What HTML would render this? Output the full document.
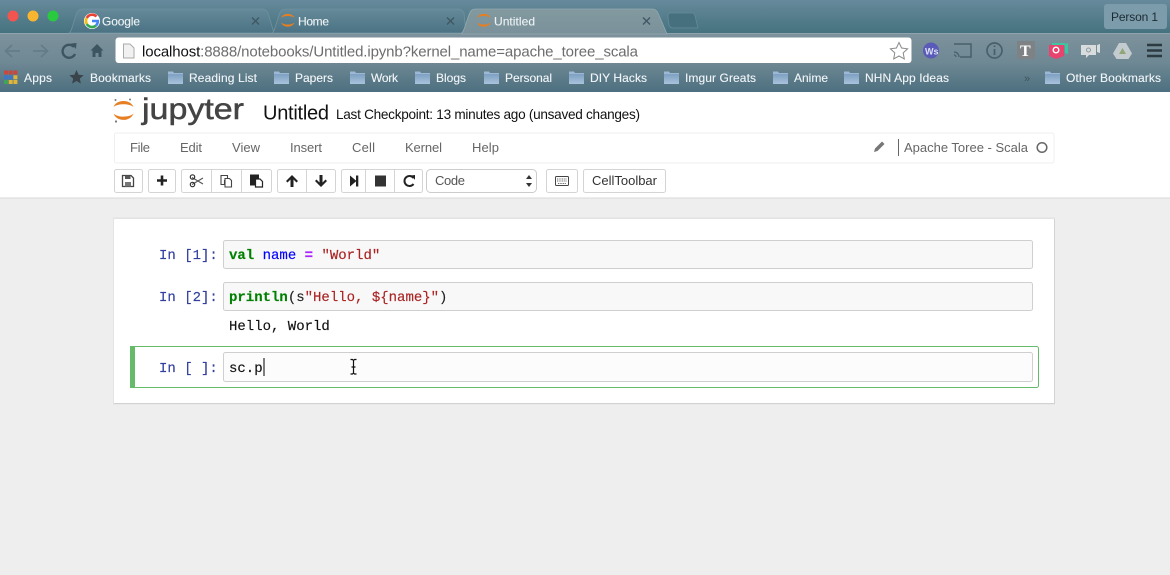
<!DOCTYPE html>
<html><head><meta charset="utf-8"><title>Untitled</title>
<style>
html,body{margin:0;padding:0;width:1170px;height:575px;overflow:hidden;background:#eee}
svg{display:block;filter:blur(.3px)}
text{font-family:"Liberation Sans",sans-serif;white-space:pre}
.bm{font-size:12px;fill:#f2f6f8;stroke:#f2f6f8;stroke-width:.12}
.tab{font-size:12px;fill:#eef3f5;stroke:#eef3f5;stroke-width:.12}
.m{font-size:13px;fill:#666}
.c{font-family:"Liberation Mono",monospace;font-size:14px;stroke-width:.15;paint-order:stroke}
.p{fill:#303f9f;stroke:#303f9f}
.btn{fill:#fff;stroke:#d4d4d4}
</style></head><body>
<svg width="1170" height="575" viewBox="0 0 1170 575" xmlns="http://www.w3.org/2000/svg">
<defs>
<linearGradient id="top" x1="0" y1="0" x2="0" y2="1"><stop offset="0" stop-color="#668a9b"/><stop offset="1" stop-color="#45727f"/></linearGradient>
<linearGradient id="bar" x1="0" y1="0" x2="0" y2="1"><stop offset="0" stop-color="#7d929c"/><stop offset=".5" stop-color="#6e8894"/><stop offset="1" stop-color="#4d6f7f"/></linearGradient>
<linearGradient id="atab" x1="0" y1="0" x2="0" y2="1"><stop offset="0" stop-color="#82999f"/><stop offset="1" stop-color="#7a919b"/></linearGradient>
<linearGradient id="itab" x1="0" y1="0" x2="0" y2="1"><stop offset="0" stop-color="#658a99"/><stop offset="1" stop-color="#4b7283"/></linearGradient>
<linearGradient id="fg" x1="0" y1="0" x2="0" y2="1"><stop offset="0" stop-color="#7ea0c2"/><stop offset="1" stop-color="#a9c2dc"/></linearGradient>
<g id="folder"><path d="M0 1.500h5l1 1.500h9v11H0z" fill="#9cb8d6"/><rect x="0" y="4" width="15" height="10" fill="url(#fg)"/></g>
<g id="jlogo"><path d="M0 6.500C3-1.500 17-1.500 20 6.500 16 2.800 4 2.800 0 6.500z" fill="#e67e22"/><path d="M0 13C4 17.200 16 17.200 20 13 17 21.500 3 21.500 0 13z" fill="#e67e22"/></g>
</defs>

<!-- chrome frame -->
<rect width="1170" height="33" fill="url(#top)"/>
<rect y="33" width="1170" height="59" fill="url(#bar)"/>
<rect y="33" width="1170" height="1" fill="#8ea3ad"/>

<circle cx="13" cy="16" r="5.500" fill="#f2544f"/>
<circle cx="33" cy="16" r="5.500" fill="#f8b52f"/>
<circle cx="53" cy="16" r="5.500" fill="#29c940"/>

<!-- tabs -->
<path d="M69 33C73 31 75 12 79 10Q80 9 83 9H262Q266 9 268 13L274 33z" fill="url(#itab)" stroke="#6f909e" stroke-width=".8"/>
<path d="M272 33C276 31 278 12 282 10Q283 9 286 9H458Q462 9 464 13L466 33z" fill="url(#itab)" stroke="#6f909e" stroke-width=".8"/>
<path d="M668 16Q668 13 671 13H692Q694 13 695 16L698 28H673Q670 28 669 25z" fill="#47707f" stroke="#658a99" stroke-width=".8"/>
<path d="M461 34C465 32 468 12 472 10Q473 9 476 9H652Q656 9 658 13L667 34z" fill="url(#atab)" stroke="#93a8b1" stroke-width=".8"/>

<circle cx="92" cy="21" r="8" fill="#fff"/>
<path d="M96.500 16.500A6 6 0 0 0 86.800 18" fill="none" stroke="#e94235" stroke-width="2.600"/>
<path d="M86.800 18A6 6 0 0 0 86.800 24" fill="none" stroke="#fbbc05" stroke-width="2.600"/>
<path d="M86.800 24A6 6 0 0 0 96 25.500" fill="none" stroke="#34a853" stroke-width="2.600"/>
<path d="M96 25.500A6 6 0 0 0 97.800 21H92" fill="none" stroke="#4285f4" stroke-width="2.600"/>
<text class="tab" x="102" y="25.500" textLength="38" lengthAdjust="spacing">Google</text>
<path d="M252 17.500l7 7M259 17.500l-7 7" stroke="#3f5863" stroke-width="1.400"/>

<use href="#jlogo" transform="translate(281 13.500) scale(.68)"/>
<text class="tab" x="298" y="25.500" textLength="31" lengthAdjust="spacing">Home</text>
<path d="M447 17.500l7 7M454 17.500l-7 7" stroke="#3f5863" stroke-width="1.400"/>

<use href="#jlogo" transform="translate(477 13.500) scale(.68)"/>
<text class="tab" x="494" y="25.500" textLength="41" lengthAdjust="spacing">Untitled</text>
<path d="M643 17.500l7 7M650 17.500l-7 7" stroke="#3f5863" stroke-width="1.400"/>

<rect x="1104" y="4" width="63" height="25" rx="3" fill="#7d9cab"/>
<text x="1111" y="21" font-size="12" fill="#1c2b33" textLength="47" lengthAdjust="spacing">Person 1</text>

<!-- nav buttons -->
<g fill="none" stroke="#5f7682" stroke-width="1.800" opacity=".7">
<path d="M20 51H6M12 45l-6.500 6 6.500 6"/>
<path d="M33 51H47M41 45l6.500 6-6.500 6"/>
</g>
<path d="M74 47A6.500 6.500 0 1 0 75 54" fill="none" stroke="#3d5560" stroke-width="2.400"/>
<path d="M71 43.500l5.500-.5-.5 6z" fill="#3d5560"/>
<path d="M97 44l-6.500 6.500H92.500V57H95.500V53H98.500V57H101.500V50.500H103.500z" fill="#3d5560"/>

<!-- omnibox -->
<rect x="115" y="38" width="797" height="26" rx="3" fill="#6f8793"/>
<rect x="115.500" y="37.500" width="796" height="25.500" rx="3" fill="#fff"/>
<path d="M123.500 44H130L134 48V58H123.500z" fill="#f1f1f1" stroke="#aaa"/>
<text x="142" y="56.500" font-size="15" fill="#6d6d6d" textLength="496" lengthAdjust="spacing"><tspan fill="#111">localhost</tspan>:8888/notebooks/Untitled.ipynb?kernel_name=apache_toree_scala</text>
<path d="M899 42.500l2.600 5.500 6 .8-4.400 4.100 1.100 6-5.300-2.900-5.300 2.900 1.100-6-4.400-4.100 6-.8z" fill="#fff" stroke="#8a8a8a" stroke-width="1"/>

<!-- extensions -->
<circle cx="931" cy="50.500" r="8" fill="#5a5ab8"/>
<text x="925" y="54.500" font-size="9" font-weight="bold" fill="#dfe3f5">Ws</text>
<path d="M954 44H971V57H960" fill="none" stroke="#47606c" stroke-width="1.500"/>
<path d="M954 52a5 5 0 0 1 5 5M954 55a2 2 0 0 1 2 2" fill="none" stroke="#47606c" stroke-width="1.300"/>
<circle cx="994.500" cy="50.500" r="7.500" fill="none" stroke="#47606c" stroke-width="1.700"/>
<path d="M994.500 45.500v1.500M994.500 49v6" stroke="#47606c" stroke-width="1.800"/>
<rect x="1017" y="41" width="18" height="18" fill="#7e8285"/>
<text x="1020" y="56" font-size="16" font-weight="bold" fill="#fff" style="font-family:'Liberation Serif',serif">T</text>
<path d="M1049 45H1064V56L1056 59L1049 56z" fill="#e8436f"/>
<path d="M1065 44l3-1V54l-3-1z" fill="#3ec6a0"/><rect x="1052" y="43" width="13" height="2" fill="#3ec6a0"/>
<circle cx="1056" cy="50" r="2.800" fill="none" stroke="#fff" stroke-width="1.400"/>
<path d="M1081 45H1096V55H1089L1086 58V55H1081z" fill="#d9dcdd"/>
<path d="M1097 45l3-1V53l-3-1z" fill="#d9dcdd"/>
<circle cx="1088.500" cy="50" r="2" fill="none" stroke="#8a9aa2" stroke-width="1"/>
<path d="M1119 43H1126L1132 53.500L1128.500 59H1116.500L1113 53.500z" fill="#c4cbce"/>
<path d="M1122.500 48L1126 54H1119z" fill="#8fa678"/>
<path d="M1147 45h15M1147 50.500h15M1147 56h15" stroke="#2c3a41" stroke-width="2.600"/>

<!-- bookmarks -->
<g>
<rect x="4" y="70.500" width="4" height="4" fill="#c9473d"/><rect x="8.700" y="70.500" width="4" height="4" fill="#c9473d"/><rect x="13.400" y="70.500" width="4" height="4" fill="#c9473d"/>
<rect x="4" y="75.300" width="4" height="4" fill="#3b78c9"/><rect x="8.700" y="75.300" width="4" height="4" fill="#3b78c9"/><rect x="13.400" y="75.300" width="4" height="4" fill="#e0b53a"/>
<rect x="4" y="80" width="4" height="4" fill="#3fa35a"/><rect x="8.700" y="80" width="4" height="4" fill="#e0b53a"/><rect x="13.400" y="80" width="4" height="4" fill="#e0b53a"/>
</g>
<text class="bm" x="24" y="82" textLength="28" lengthAdjust="spacing">Apps</text>
<path d="M76.500 70l2.100 4.700 5 .5-3.800 3.400 1.100 5-4.400-2.600-4.400 2.600 1.100-5-3.800-3.400 5-.5z" fill="#3a444b"/>
<text class="bm" x="90" y="82" textLength="61" lengthAdjust="spacing">Bookmarks</text>
<use href="#folder" x="168" y="70"/><text class="bm" x="189" y="82" textLength="68" lengthAdjust="spacing">Reading List</text>
<use href="#folder" x="274" y="70"/><text class="bm" x="295" y="82" textLength="38" lengthAdjust="spacing">Papers</text>
<use href="#folder" x="350" y="70"/><text class="bm" x="371" y="82" textLength="27" lengthAdjust="spacing">Work</text>
<use href="#folder" x="415" y="70"/><text class="bm" x="436" y="82" textLength="30" lengthAdjust="spacing">Blogs</text>
<use href="#folder" x="484" y="70"/><text class="bm" x="505" y="82" textLength="47" lengthAdjust="spacing">Personal</text>
<use href="#folder" x="569" y="70"/><text class="bm" x="590" y="82" textLength="57" lengthAdjust="spacing">DIY Hacks</text>
<use href="#folder" x="664" y="70"/><text class="bm" x="685" y="82" textLength="71" lengthAdjust="spacing">Imgur Greats</text>
<use href="#folder" x="773" y="70"/><text class="bm" x="794" y="82" textLength="34" lengthAdjust="spacing">Anime</text>
<use href="#folder" x="844" y="70"/><text class="bm" x="865" y="82" textLength="84" lengthAdjust="spacing">NHN App Ideas</text>
<text x="1024" y="82" font-size="11" fill="#3d5560">»</text>
<use href="#folder" x="1045" y="70"/><text class="bm" x="1066" y="82" textLength="95" lengthAdjust="spacing">Other Bookmarks</text>

<!-- page -->
<rect y="92" width="1170" height="483" fill="#eee"/>
<rect y="92" width="1170" height="106" fill="#fff"/>
<rect y="197.500" width="1170" height="1" fill="#d8d8d8"/>

<!-- jupyter header -->
<use href="#jlogo" transform="translate(113.500 100.500)"/>
<circle cx="115.500" cy="100" r="1" fill="#777"/><circle cx="130" cy="99.500" r="1" fill="#777"/><circle cx="116" cy="121.500" r="1.100" fill="#777"/>
<text x="142" y="119" font-size="30" fill="#444" stroke="#444" stroke-width=".5" textLength="102" lengthAdjust="spacingAndGlyphs">jupyter</text>
<text x="263" y="119.500" font-size="20" fill="#111" textLength="66" lengthAdjust="spacing">Untitled</text>
<text x="336" y="119" font-size="13.600" fill="#111" textLength="304" lengthAdjust="spacing">Last Checkpoint: 13 minutes ago (unsaved changes)</text>

<!-- menu -->
<rect x="114.500" y="133" width="939.500" height="30" rx="2" fill="#fff" stroke="#efefef"/>
<text class="m" x="130" y="152" textLength="20" lengthAdjust="spacing">File</text>
<text class="m" x="180" y="152" textLength="22" lengthAdjust="spacing">Edit</text>
<text class="m" x="232" y="152" textLength="28" lengthAdjust="spacing">View</text>
<text class="m" x="290" y="152" textLength="32" lengthAdjust="spacing">Insert</text>
<text class="m" x="352" y="152" textLength="23" lengthAdjust="spacing">Cell</text>
<text class="m" x="405" y="152" textLength="37" lengthAdjust="spacing">Kernel</text>
<text class="m" x="472" y="152" textLength="27" lengthAdjust="spacing">Help</text>
<path d="M874 152l1-3.500 7-7 2.500 2.500-7 7z" fill="#777"/>
<rect x="898" y="139" width="1" height="17" fill="#666"/>
<text class="m" x="904" y="152" textLength="124" lengthAdjust="spacing">Apache Toree - Scala</text>
<circle cx="1042" cy="147.500" r="4.800" fill="none" stroke="#666" stroke-width="1.500"/>

<!-- toolbar -->
<rect class="btn" x="114.500" y="169.500" width="28" height="23" rx="2"/>
<path d="M122.500 175.500H131L133.500 178V186.500H122.500z" fill="none" stroke="#444" stroke-width="1.300"/><rect x="125" y="175.500" width="5.500" height="3.500" fill="#555"/><rect x="125" y="182" width="6" height="4.500" fill="#777"/>
<rect class="btn" x="148.500" y="169.500" width="27" height="23" rx="2"/>
<path d="M162 175.500v10M157 180.500h10" stroke="#222" stroke-width="2.600"/>
<rect class="btn" x="181.500" y="169.500" width="90" height="23" rx="2"/>
<path d="M211.500 169.500v23M241.500 169.500v23" stroke="#d4d4d4"/>
<path d="M192 177.500l11 6.500M192 184.500l11-6.500" stroke="#555" stroke-width="1.100"/><circle cx="192.500" cy="177" r="2.200" fill="none" stroke="#333" stroke-width="1.200"/><circle cx="192.500" cy="184.500" r="2.200" fill="none" stroke="#333" stroke-width="1.200"/>
<path d="M221 175.500h6.500v5h-3v4h-3.500z" fill="#fff" stroke="#444" stroke-width="1.100"/><path d="M225 178.500h4.500l2 2v6.500h-6.500z" fill="#fff" stroke="#444" stroke-width="1.100"/>
<path d="M250 174.500h9v4h-4v7h-5z" fill="#222"/><path d="M255.500 179h4.500l2.500 2.500v5.500h-7z" fill="#fff" stroke="#222" stroke-width="1.200"/>
<rect class="btn" x="277.500" y="169.500" width="58" height="23" rx="2"/>
<path d="M306.500 169.500v23" stroke="#d4d4d4"/>
<path d="M292 175l6 6-1.500 1.500-3-3V187h-3v-7.500l-3 3-1.500-1.500z" fill="#222"/>
<path d="M321 187l6-6-1.500-1.500-3 3V175h-3v7.500l-3-3-1.500 1.500z" fill="#222"/>
<rect class="btn" x="341.500" y="169.500" width="81" height="23" rx="2"/>
<path d="M365.500 169.500v23M394.500 169.500v23" stroke="#d4d4d4"/>
<path d="M350 175.500l6.500 5.500-6.500 5.500z" fill="#222"/><rect x="356" y="175.500" width="2.300" height="11" fill="#222"/>
<rect x="375" y="175.500" width="11" height="11" fill="#333"/>
<path d="M413.500 178A5 5 0 1 0 413.500 184" fill="none" stroke="#222" stroke-width="2"/><path d="M410.500 175.500l4.500-.5v4.800z" fill="#222"/>
<rect x="426.500" y="169.500" width="110" height="23" rx="4" fill="#fff" stroke="#ccc"/>
<text x="435" y="185" font-size="13" fill="#555" textLength="30" lengthAdjust="spacing">Code</text>
<path d="M529 175l3 4h-6zM529 187l3-4h-6z" fill="#333"/>
<rect class="btn" x="546.500" y="169.500" width="31" height="23" rx="2"/>
<rect x="555.500" y="176.500" width="13" height="9" rx="1" fill="none" stroke="#444"/><path d="M557 179h10M557 181h10M558 183.500h8" stroke="#666" stroke-dasharray="1 .7"/>
<rect class="btn" x="583.500" y="169.500" width="82" height="23" rx="2"/>
<text x="592" y="185" font-size="13" fill="#333" textLength="65" lengthAdjust="spacing">CellToolbar</text>

<!-- notebook paper -->
<rect x="113" y="217.500" width="942" height="187" fill="#e3e3e3"/>
<path d="M1054.500 219V404M114 403.500H1055" stroke="#d2d2d2" fill="none"/>
<rect x="114" y="219" width="940" height="184" fill="#fff"/>

<!-- cell 1 -->
<text class="c p" x="159" y="259">In [1]:</text>
<rect x="223.500" y="240.500" width="809" height="28" rx="2" fill="#f8f8f8" stroke="#cfcfcf"/>
<text class="c" x="229" y="259"><tspan fill="#008000" stroke="#008000" font-weight="bold">val</tspan><tspan fill="#00f" stroke="#00f"> name </tspan><tspan fill="#a2f" stroke="#a2f" font-weight="bold">=</tspan><tspan fill="#a22" stroke="#a22"> "World"</tspan></text>

<!-- cell 2 -->
<text class="c p" x="159" y="301">In [2]:</text>
<rect x="223.500" y="282.500" width="809" height="28" rx="2" fill="#f8f8f8" stroke="#cfcfcf"/>
<text class="c" x="229" y="301"><tspan fill="#008000" stroke="#008000" font-weight="bold">println</tspan><tspan fill="#222" stroke="#222">(s</tspan><tspan fill="#a22" stroke="#a22">"Hello, ${name}"</tspan><tspan fill="#222" stroke="#222">)</tspan></text>
<text class="c" x="229" y="330" fill="#111" stroke="#111">Hello, World</text>

<!-- cell 3 -->
<rect x="130.500" y="346.500" width="908" height="41" rx="2" fill="#fff" stroke="#66bb6a"/>
<rect x="130" y="346" width="5" height="42" fill="#66bb6a"/>
<text class="c p" x="159" y="372">In [ ]:</text>
<rect x="223.500" y="352.500" width="809" height="29" rx="2" fill="#fcfcfc" stroke="#cfcfcf"/>
<text class="c" x="229" y="372" fill="#111" stroke="#111">sc.p</text>
<rect x="263.500" y="358" width="1" height="18" fill="#000"/>
<path d="M350.500 359.500h2l1 1 1-1h2M353.500 360.500v12.500M350.500 374h2l1-1 1 1h2M351.500 367h4" fill="none" stroke="#111" stroke-width="1.200"/>
</svg>
</body></html>
